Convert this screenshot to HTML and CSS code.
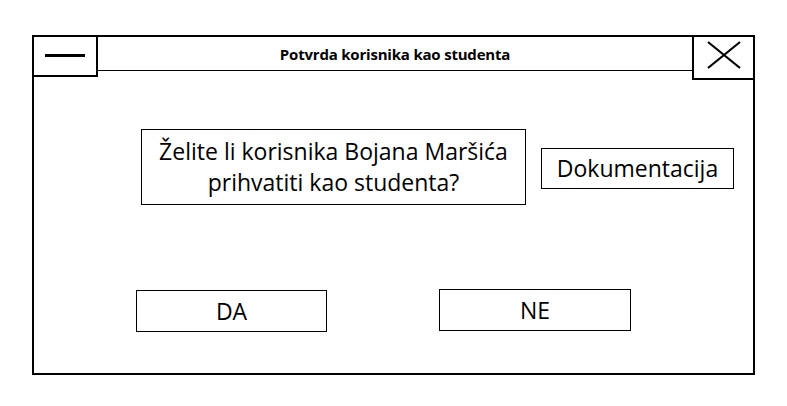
FILE: index.html
```html
<!DOCTYPE html>
<html lang="hr">
  <head>
    <meta charset="UTF-8" />
    <meta name="viewport" content="width=device-width, initial-scale=1.0" />
    <title>Potvrda korisnika kao studenta</title>
    <link rel="stylesheet" href="styles.css">
  </head>
  <body>
    <div class="window">
      <div class="title-bar">
        <div class="min-box"><span class="min-dash"></span></div>
        <div class="title">Potvrda korisnika kao studenta</div>
        <div class="close-box">
          <svg width="34" height="28" viewBox="0 0 34 28">
            <path d="M1 1 L33 27 M33 1 L1 27" stroke="#000" stroke-width="2.2" fill="none" />
          </svg>
        </div>
      </div>

      <div class="content">
        <div class="question-row">
          <div class="question">Želite li korisnika Bojana Maršića<br />prihvatiti kao studenta?</div>
          <div class="doc-btn">Dokumentacija</div>
        </div>
        <div class="answer-row">
          <div class="answer-btn">DA</div>
          <div class="answer-btn answer-no">NE</div>
        </div>
      </div>
    </div>
  </body>
</html>
```

FILE: styles.css
```css
body {
  margin: 0;
  padding: 0;
  background-color: #fff;
  font-family: "Open Sans", "Liberation Sans", sans-serif;
  color: #000;
}

.window {
  margin: 35px 0 0 32px;
  width: 719px;
  height: 336px;
  border: 2px solid #000;
  display: flex;
  flex-direction: column;
}

.title-bar {
  display: flex;
  align-items: flex-start;
}

.min-box {
  width: 62px;
  height: 38px;
  border-right: 2px solid #000;
  border-bottom: 2px solid #000;
  display: flex;
  align-items: center;
  justify-content: center;
}

.min-dash {
  display: block;
  width: 40px;
  height: 3px;
  margin-top: -2px;
  background-color: #000;
}

.title {
  flex: 1;
  height: 33px;
  border-bottom: 1px solid #000;
  display: flex;
  align-items: center;
  justify-content: center;
  font-size: 15px;
  font-weight: 700;
  letter-spacing: -0.2px;
}

.close-box {
  width: 59px;
  height: 41px;
  border-left: 2px solid #000;
  border-bottom: 2px solid #000;
  display: flex;
  align-items: center;
  justify-content: center;
}

.close-box svg {
  display: block;
  margin-top: -5px;
}

.content {
  display: flex;
  flex-direction: column;
}

.question-row {
  display: flex;
  align-items: center;
  gap: 15px;
  margin: 49px 0 0 107px;
}

.question {
  width: 383px;
  height: 74px;
  border: 1px solid #000;
  display: flex;
  align-items: center;
  justify-content: center;
  text-align: center;
  font-size: 23px;
  line-height: 31px;
}

.doc-btn {
  width: 191px;
  height: 39px;
  border: 1px solid #000;
  display: flex;
  align-items: center;
  justify-content: center;
  font-size: 23px;
  margin-top: 2px;
}

.answer-row {
  display: flex;
  align-items: flex-start;
  gap: 112px;
  margin: 84px 0 0 102px;
}

.answer-btn {
  width: 189px;
  height: 40px;
  border: 1px solid #000;
  display: flex;
  align-items: center;
  justify-content: center;
  font-size: 23px;
  margin-top: 1px;
}

.answer-no {
  width: 190px;
  margin-top: 0;
}
```
